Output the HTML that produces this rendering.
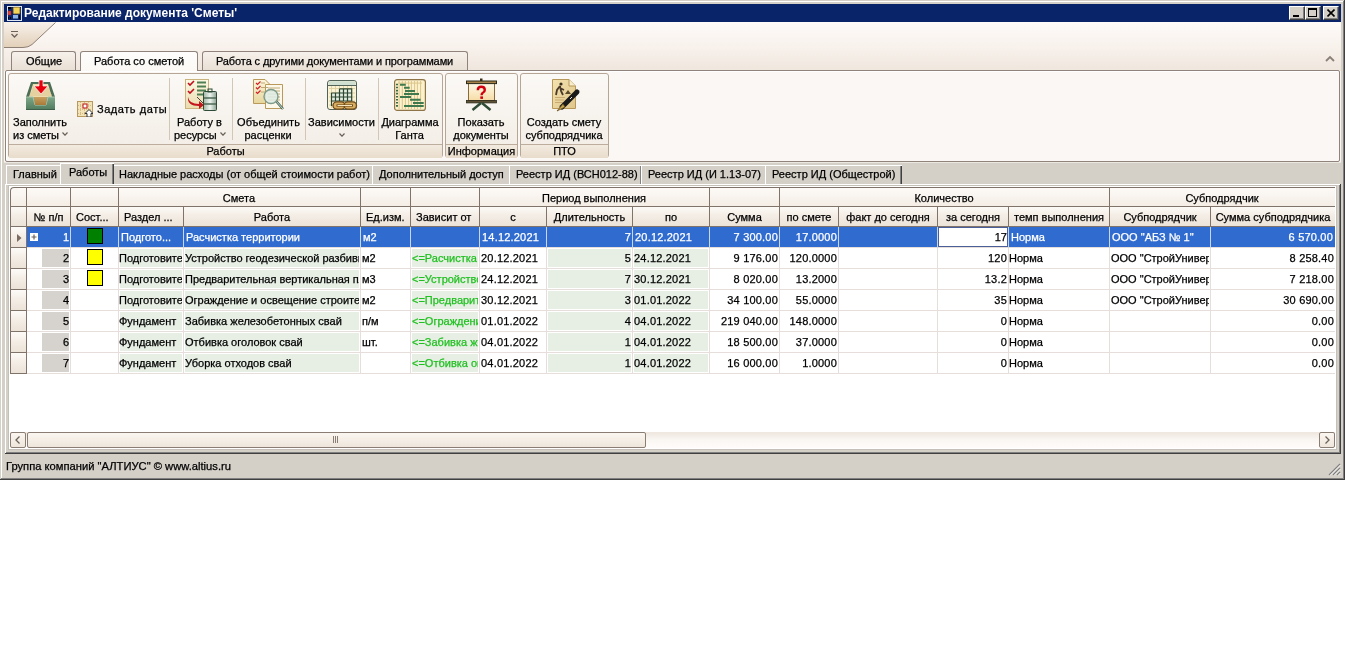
<!DOCTYPE html><html><head><meta charset="utf-8"><style>
html,body{margin:0;padding:0;}
body{width:1345px;height:648px;overflow:hidden;background:#fff;position:relative;font-family:"Liberation Sans", sans-serif;font-size:11px;color:#000;}
.t{position:absolute;white-space:nowrap;line-height:13px;}
#root{position:absolute;left:0;top:0;width:1345px;height:648px;will-change:transform;}
.t,.c{-webkit-text-stroke:0.25px currentColor;}
.c{position:absolute;overflow:hidden;white-space:nowrap;line-height:13px;}

</style></head><body><div id="root">
<div style="position:absolute;left:0px;top:0px;width:1345px;height:480px;background:#d4d0c8;"></div>
<div style="position:absolute;left:0px;top:0px;width:1344px;height:1px;background:#d4d0c8;"></div>
<div style="position:absolute;left:1px;top:1px;width:1342px;height:1px;background:#fff;"></div>
<div style="position:absolute;left:1px;top:1px;width:1px;height:478px;background:#fff;"></div>
<div style="position:absolute;left:1344px;top:0px;width:1px;height:480px;background:#404040;"></div>
<div style="position:absolute;left:0px;top:479px;width:1345px;height:1px;background:#404040;"></div>
<div style="position:absolute;left:1343px;top:1px;width:1px;height:478px;background:#808080;"></div>
<div style="position:absolute;left:1px;top:478px;width:1343px;height:1px;background:#808080;"></div>
<div style="position:absolute;left:4px;top:4px;width:1337px;height:18px;background:#0a246a;"></div>
<svg style="position:absolute;left:7px;top:6px" width="15" height="15" viewBox="0 0 15 15">
<rect x="0" y="0" width="15" height="15" fill="#dde6f2"/>
<rect x="1" y="1" width="13" height="13" fill="#0a246a"/>
<rect x="1" y="1" width="3" height="2" fill="#000"/>
<rect x="1" y="5" width="3" height="4" fill="#e0483e" stroke="#902020" stroke-width="0.5"/>
<rect x="6.3" y="1.3" width="6.5" height="6.5" rx="1" fill="#f5d45a" stroke="#b08a20" stroke-width="0.7"/>
<rect x="6" y="9" width="5" height="3.5" fill="#8fb4ea"/>
<rect x="1" y="11" width="1" height="2" fill="#000"/>
<rect x="3" y="11" width="1" height="2" fill="#000"/>
<rect x="12" y="9" width="1" height="4" fill="#000"/>
</svg>
<div class="t" style="left:24px;top:6px;color:#fff;font-weight:bold;font-size:12px;line-height:14px;-webkit-text-stroke:0;">Редактирование документа &#x27;Сметы&#x27;</div>
<div style="position:absolute;left:1289px;top:6px;width:16px;height:14px;background:#d4d0c8;box-sizing:border-box;border-top:1px solid #fff;border-left:1px solid #fff;border-right:1px solid #404040;border-bottom:1px solid #404040;"><div style="position:absolute;left:0;top:0;right:0;bottom:0;border-right:1px solid #808080;border-bottom:1px solid #808080;"></div><div style="position:absolute;left:3px;top:8px;width:6px;height:2px;background:#000"></div></div>
<div style="position:absolute;left:1305px;top:6px;width:16px;height:14px;background:#d4d0c8;box-sizing:border-box;border-top:1px solid #fff;border-left:1px solid #fff;border-right:1px solid #404040;border-bottom:1px solid #404040;"><div style="position:absolute;left:0;top:0;right:0;bottom:0;border-right:1px solid #808080;border-bottom:1px solid #808080;"></div><div style="position:absolute;left:2px;top:1px;width:9px;height:9px;box-sizing:border-box;border:1px solid #000;border-top-width:2px"></div></div>
<div style="position:absolute;left:1323px;top:6px;width:16px;height:14px;background:#d4d0c8;box-sizing:border-box;border-top:1px solid #fff;border-left:1px solid #fff;border-right:1px solid #404040;border-bottom:1px solid #404040;"><div style="position:absolute;left:0;top:0;right:0;bottom:0;border-right:1px solid #808080;border-bottom:1px solid #808080;"></div><svg style="position:absolute;left:3px;top:2px" width="8" height="8" viewBox="0 0 8 8"><path d="M0.5 0.5L7.5 7.5M7.5 0.5L0.5 7.5" stroke="#000" stroke-width="1.6"/></svg></div>
<div style="position:absolute;left:4px;top:22px;width:1337px;height:140px;background:#f9f6f2;"></div>
<div style="position:absolute;left:4px;top:22px;width:1337px;height:49px;background:linear-gradient(#fdfaf8 0%,#f9f3ee 45%,#efe6dd 100%);"></div>
<svg style="position:absolute;left:4px;top:22px" width="60" height="28" viewBox="0 0 60 28">
<defs><linearGradient id="qa" x1="0" y1="0" x2="0" y2="1"><stop offset="0" stop-color="#f8f2ec"/><stop offset="1" stop-color="#e2cfb8"/></linearGradient></defs>
<path d="M0 0 H52 L28 22.5 Q24.5 25.5 19 25.5 H0 Z" fill="url(#qa)"/>
<path d="M51.5 0.5 L28 22.5 Q24.5 25.5 19 25.5 H0" fill="none" stroke="#8f8076" stroke-width="1"/>
<path d="M7 9.5 H14" stroke="#6b625a" stroke-width="1"/>
<path d="M7.5 12 L10.5 15 L13.5 12" stroke="#6b625a" stroke-width="1.3" fill="none"/>
</svg>
<div style="position:absolute;left:11px;top:51px;width:65px;height:19px;box-sizing:border-box;border:1px solid #8f837b;border-bottom:none;border-radius:3px 3px 0 0;background:linear-gradient(#f6f1eb,#e9e0d5);"></div>
<div class="t" style="left:26px;top:55px;">Общие</div>
<div style="position:absolute;left:202px;top:51px;width:266px;height:19px;box-sizing:border-box;border:1px solid #8f837b;border-bottom:none;border-radius:3px 3px 0 0;background:linear-gradient(#f6f1eb,#e9e0d5);"></div>
<div class="t" style="left:216px;top:55px;letter-spacing:-0.11px;">Работа с другими документами и программами</div>
<div style="position:absolute;left:5px;top:70px;width:1335px;height:92px;box-sizing:border-box;border:1px solid #8f837b;border-radius:2px;background:#fbf7f4;box-shadow:inset 1px 1px 0 #fff;"></div>
<div style="position:absolute;left:80px;top:51px;width:118px;height:20px;box-sizing:border-box;border:1px solid #8f837b;border-bottom:none;border-radius:3px 3px 0 0;background:linear-gradient(#fefdfc,#fbf8f4);"></div>
<div class="t" style="left:94px;top:55px;">Работа со сметой</div>
<svg style="position:absolute;left:1325px;top:55px" width="10" height="7" viewBox="0 0 10 7"><path d="M1 6 L5 2 L9 6" stroke="#8a8078" stroke-width="1.8" fill="none"/></svg>
<div style="position:absolute;left:8px;top:73px;width:435px;height:85px;box-sizing:border-box;border:1px solid #b5a696;border-radius:3px;background:linear-gradient(#fbf9f6,#f2ece4);"></div>
<div style="position:absolute;left:9px;top:144px;width:433px;height:13px;border-top:1px solid #bcad9d;background:linear-gradient(#f3ebe0,#e8dccb);"></div>
<div class="t" style="left:8px;top:145px;width:435px;text-align:center;">Работы</div>
<div style="position:absolute;left:445px;top:73px;width:73px;height:85px;box-sizing:border-box;border:1px solid #b5a696;border-radius:3px;background:linear-gradient(#fbf9f6,#f2ece4);"></div>
<div style="position:absolute;left:446px;top:144px;width:71px;height:13px;border-top:1px solid #bcad9d;background:linear-gradient(#f3ebe0,#e8dccb);"></div>
<div class="t" style="left:445px;top:145px;width:73px;text-align:center;">Информация</div>
<div style="position:absolute;left:520px;top:73px;width:89px;height:85px;box-sizing:border-box;border:1px solid #b5a696;border-radius:3px;background:linear-gradient(#fbf9f6,#f2ece4);"></div>
<div style="position:absolute;left:521px;top:144px;width:87px;height:13px;border-top:1px solid #bcad9d;background:linear-gradient(#f3ebe0,#e8dccb);"></div>
<div class="t" style="left:520px;top:145px;width:89px;text-align:center;">ПТО</div>
<div style="position:absolute;left:169px;top:78px;width:1px;height:62px;background:#d2c6b8;"></div>
<div style="position:absolute;left:232px;top:78px;width:1px;height:62px;background:#d2c6b8;"></div>
<div style="position:absolute;left:305px;top:78px;width:1px;height:62px;background:#d2c6b8;"></div>
<div style="position:absolute;left:378px;top:78px;width:1px;height:62px;background:#d2c6b8;"></div>
<svg style="position:absolute;left:25px;top:79px" width="32" height="32" viewBox="0 0 32 32">
<defs><linearGradient id="tg" x1="0" y1="0" x2="0" y2="1"><stop offset="0" stop-color="#7fa888"/><stop offset="1" stop-color="#4f7a5c"/></linearGradient>
<linearGradient id="tb" x1="0" y1="0" x2="0" y2="1"><stop offset="0" stop-color="#c7a060"/><stop offset="1" stop-color="#a87a38"/></linearGradient></defs>
<path d="M6 3 H25 L30 18 H1 Z" fill="#4c6e56"/>
<path d="M8 5 H23 L27 18 H4 Z" fill="#efdcae"/>
<path d="M8 8 H23 M7 10 H24 M7 12 H25 M6 14 H26 M5 16 H27" stroke="#d8c08c" stroke-width="0.8"/>
<path d="M1 18 H30 V31 H1 Z" fill="url(#tg)"/>
<path d="M1 18 H8 L10 26 H21 L23 18 H30" fill="none" stroke="#a9c6ae" stroke-width="1"/>
<path d="M9 18 H22 L21 26 H10 Z" fill="url(#tb)"/>
<path d="M1 30.5 H30" stroke="#3d5e48" stroke-width="1"/>
<path d="M14 1 H18 V7 H23 L16 15 L9 7 H14 Z" fill="#e8000c" stroke="#fff" stroke-width="0.7"/>
</svg>
<svg style="position:absolute;left:77px;top:101px" width="16" height="16" viewBox="0 0 16 16">
<rect x="0.5" y="0.5" width="15" height="15" fill="#f2e4b8" stroke="#b89a60"/>
<path d="M1 4.5 H15 M1 8.5 H15 M1 12.5 H15 M3.5 1 V15 M7.5 1 V15 M11.5 1 V15" stroke="#cfae70" stroke-width="0.8" stroke-dasharray="1 1"/>
<rect x="6" y="3" width="4" height="4" fill="#fff" stroke="#c02020" stroke-width="1.1"/>
<path d="M12 8.5 L16 12.5 H14 V16 H10 V12.5 H8 Z" fill="#fff" stroke="#303030" stroke-width="1"/>
</svg>
<svg style="position:absolute;left:185px;top:78px" width="32" height="33" viewBox="0 0 32 33">
<defs><linearGradient id="pp" x1="0" y1="0" x2="0" y2="1"><stop offset="0" stop-color="#fdf8e4"/><stop offset="1" stop-color="#eadcae"/></linearGradient>
<linearGradient id="bt" x1="0" y1="0" x2="1" y2="0"><stop offset="0" stop-color="#9fb5a5"/><stop offset="0.5" stop-color="#eef4ef"/><stop offset="1" stop-color="#8aa292"/></linearGradient></defs>
<rect x="0.5" y="1.5" width="23" height="29" fill="url(#pp)" stroke="#c9b27c"/>
<path d="M3 5 L5 7 L9 3 M3 13 L5 15 L9 11" stroke="#c0101c" stroke-width="1.6" fill="none"/>
<path d="M12 4.5 H21 M12 8.5 H21 M12 12.5 H21 M12 16.5 H21" stroke="#4f7f52" stroke-width="2"/>
<path d="M3 19 Q4 26 14 26 V23 L19 27 L14 31 V28 Q2 28 3 19 Z" fill="#c4141c"/>
<path d="M12 19 L19 26" stroke="#202020" stroke-width="0.8"/>
<rect x="18.5" y="13.5" width="13" height="19" rx="1" fill="url(#bt)" stroke="#2f4a36"/>
<rect x="23" y="11" width="4" height="3" fill="none" stroke="#2f4a36"/>
<path d="M19 20 H31 M19 26 H31" stroke="#4c6a54" stroke-width="1.5"/>
</svg>
<svg style="position:absolute;left:253px;top:78px" width="32" height="33" viewBox="0 0 32 33">
<defs><linearGradient id="d1" x1="0" y1="0" x2="0" y2="1"><stop offset="0" stop-color="#fdf6dc"/><stop offset="1" stop-color="#e6d59c"/></linearGradient></defs>
<path d="M0.5 1.5 H12 L16.5 6 V25.5 H0.5 Z" fill="url(#d1)" stroke="#b99a5a"/>
<path d="M12.5 6.5 H29.5 V30.5 H12.5 Z" fill="#fdf9ea" stroke="#b99a5a"/>
<path d="M3 5 L4.5 6.5 L7.5 3.5 M3 9.5 L4.5 11 L7.5 8 M3 14 L4.5 15.5 L7.5 12.5" stroke="#d0202a" stroke-width="1.2" fill="none"/>
<path d="M8 5 H12 M8 9.5 H15 M8 14 H15 M15 10 H27 M15 13 H27 M15 16 H27 M15 19 H27 M15 22 H27" stroke="#b8a070" stroke-width="0.9"/>
<path d="M23 23 L30 31" stroke="#4a6a5a" stroke-width="2.6"/>
<path d="M23 23 L30 31" stroke="#c8d8d0" stroke-width="1"/>
<circle cx="18" cy="18.5" r="7" fill="#dfece4" fill-opacity="0.85" stroke="#7e9a8a" stroke-width="1.4"/>
</svg>
<svg style="position:absolute;left:327px;top:80px" width="31" height="31" viewBox="0 0 31 31">
<rect x="0.5" y="0.5" width="29" height="29" rx="2.5" fill="#fbf3d6" stroke="#52645a"/>
<rect x="1.5" y="1.2" width="27" height="4.3" rx="1.5" fill="#cfe0d2"/>
<path d="M1 5.5 H29" stroke="#52645a"/>
<path d="M2 8.5 H28 M2 13 H28 M2 17 H28 M2 21 H28 M2 25 H28 M4.5 6 V28 M8.5 6 V28 M12.5 6 V28 M16.5 6 V28 M20.5 6 V28 M24.5 6 V28" stroke="#ddd0a0" stroke-width="0.9"/>
<path d="M12.5 9 H24.5 V13 H12.5 Z M4.5 13 H24.5 V21 H4.5 Z" fill="#e4ece0"/>
<path d="M12.5 8.8 H24.7 V21.2 M4.3 13 H24.7 M4.3 17 H24.7 M4.3 21 H24.7 M4.5 13 V26 M8.5 13 V21 M12.5 8.8 V21 M16.5 8.8 V21 M20.5 8.8 V21" stroke="#2b4630" stroke-width="1.2" fill="none"/>
<rect x="6" y="21.8" width="12" height="7.4" rx="3.7" fill="#d8ae62" stroke="#6e4a18" stroke-width="1.3"/>
<rect x="17" y="21.8" width="12.5" height="7.4" rx="3.7" fill="#d8ae62" stroke="#6e4a18" stroke-width="1.3"/>
<path d="M9.5 25.5 H26" stroke="#6e4a18" stroke-width="2.2"/>
<path d="M10.5 25.5 H25" stroke="#f6e6c0" stroke-width="1"/>
</svg>
<svg style="position:absolute;left:394px;top:79px" width="32" height="32" viewBox="0 0 32 32">
<rect x="0.6" y="0.6" width="30.8" height="30.8" rx="2.5" fill="#fbf1cc" stroke="#8f7448" stroke-width="1.2"/>
<path d="M5.1 2 V30 M8.3 2 V30 M11.4 2 V30 M14.6 2 V30 M17.4 2 V30 M20.6 2 V30 M23.4 2 V30 M26.6 2 V30" stroke="#dcc58a" stroke-width="1"/>
<path d="M4 4.1 H28" stroke="#dcc58a" stroke-width="1"/>
<path d="M3 4.7 V28" stroke="#3d6a48" stroke-width="2" stroke-dasharray="1.6 1.45"/>
<path d="M6 5.8 H11.7 M10 8.8 H15.7 M11 11.9 H21 M10 15 H25 M6 17.9 H17 M16 20.8 H26.6 M19 23.9 H29.7 M10 27 H29.7" stroke="#3f7a4e" stroke-width="2"/>
</svg>
<svg style="position:absolute;left:466px;top:78px" width="31" height="33" viewBox="0 0 31 33">
<defs><linearGradient id="sc" x1="0" y1="0" x2="0" y2="1"><stop offset="0" stop-color="#fffbec"/><stop offset="1" stop-color="#f6dca6"/></linearGradient></defs>
<rect x="14" y="0.5" width="2.5" height="3" fill="#3a2e1a"/>
<rect x="2.5" y="4.5" width="26" height="18" fill="url(#sc)" stroke="#8a6a38" stroke-width="1"/>
<rect x="0.5" y="3" width="30" height="2.6" fill="#a8844a" stroke="#2a2a1a" stroke-width="1"/>
<rect x="0.5" y="22.5" width="30" height="2.4" fill="#5e5034" stroke="#2a2a1a" stroke-width="0.8"/>
<path d="M15 25 L6.5 32 M16 25 L24.5 32" stroke="#2e4a34" stroke-width="2.4"/>
<path d="M11.8 12.2 Q11.8 8.8 15.2 8.8 Q18.8 8.8 18.8 12 Q18.8 14 16.6 15 Q15.6 15.6 15.6 17.2" stroke="#d00010" stroke-width="2.4" fill="none"/>
<rect x="14.3" y="18.4" width="2.7" height="2.5" fill="#d00010"/>
</svg>
<svg style="position:absolute;left:551px;top:78px" width="30" height="34" viewBox="0 0 30 34">
<defs><linearGradient id="dp" x1="0" y1="0" x2="1" y2="1"><stop offset="0" stop-color="#f3e2b0"/><stop offset="1" stop-color="#e0c68a"/></linearGradient></defs>
<path d="M1.5 1.5 H18 L24.5 8 V30.5 H1.5 Z" fill="url(#dp)" stroke="#b8985a"/>
<path d="M18 1.5 V8 H24.5" fill="#f8eccc" stroke="#b8985a"/>
<circle cx="10" cy="6" r="1.6" fill="#3a3020"/>
<path d="M9 8 L6 12 L5 17 M9 8 L10 13 L12 17 M9 10 L13 12" stroke="#4a3a2a" stroke-width="1.8" fill="none"/>
<path d="M14 16 L17 12 L20 16 Z" fill="#5a4a2a"/>
<path d="M4 19.5 H14 M4 22 H13 M4 24.5 H12" stroke="#c8aa70" stroke-width="1"/>
<path d="M26 14 L11 29" stroke="#1a1a1a" stroke-width="5" stroke-linecap="round"/>
<path d="M21 19 L19 21" stroke="#e8e8e8" stroke-width="1"/>
<path d="M12 26 L6 33 L14 29 Z" fill="#c8a850" stroke="#6a5020" stroke-width="0.8"/>
</svg>
<div class="t" style="left:13px;top:116px;">Заполнить</div>
<div class="t" style="left:13px;top:129px;">из сметы</div>
<svg style="position:absolute;left:62px;top:132px" width="6" height="4" viewBox="0 0 6 4"><path d="M0.5 0.5 L3 3.2 L5.5 0.5" stroke="#6a625a" stroke-width="1.2" fill="none"/></svg>
<div class="t" style="left:97px;top:103px;letter-spacing:0.55px;">Задать даты</div>
<div class="t" style="left:177px;top:116px;">Работу в</div>
<div class="t" style="left:174px;top:129px;">ресурсы</div>
<svg style="position:absolute;left:220px;top:132px" width="6" height="4" viewBox="0 0 6 4"><path d="M0.5 0.5 L3 3.2 L5.5 0.5" stroke="#6a625a" stroke-width="1.2" fill="none"/></svg>
<div class="t" style="left:168.5px;top:116px;width:200px;text-align:center;">Объединить</div>
<div class="t" style="left:168px;top:129px;width:200px;text-align:center;">расценки</div>
<div class="t" style="left:241.5px;top:116px;width:200px;text-align:center;">Зависимости</div>
<svg style="position:absolute;left:339px;top:133px" width="6" height="4" viewBox="0 0 6 4"><path d="M0.5 0.5 L3 3.2 L5.5 0.5" stroke="#6a625a" stroke-width="1.2" fill="none"/></svg>
<div class="t" style="left:310px;top:116px;width:200px;text-align:center;">Диаграмма</div>
<div class="t" style="left:309.5px;top:129px;width:200px;text-align:center;">Ганта</div>
<div class="t" style="left:381px;top:116px;width:200px;text-align:center;">Показать</div>
<div class="t" style="left:381px;top:129px;width:200px;text-align:center;">документы</div>
<div class="t" style="left:464px;top:116px;width:200px;text-align:center;">Создать смету</div>
<div class="t" style="left:464px;top:129px;width:200px;text-align:center;">субподрядчика</div>
<div style="position:absolute;left:4px;top:162px;width:1337px;height:292px;background:#d4d0c8;"></div>
<div style="position:absolute;left:4px;top:162px;width:1337px;height:1px;background:#ebe8e2;"></div>
<div style="position:absolute;left:5px;top:184px;width:1336px;height:1px;background:#fff;"></div>
<div style="position:absolute;left:5px;top:184px;width:1px;height:270px;background:#fff;"></div>
<div style="position:absolute;left:5px;top:453px;width:1336px;height:1px;background:#404040;"></div>
<div style="position:absolute;left:1340px;top:184px;width:1px;height:270px;background:#404040;"></div>
<div style="position:absolute;left:6px;top:452px;width:1334px;height:1px;background:#808080;"></div>
<div style="position:absolute;left:1339px;top:185px;width:1px;height:268px;background:#808080;"></div>
<div style="position:absolute;left:6px;top:165px;width:55px;height:19px;background:#d4d0c8;border-top:1px solid #fff;border-left:1px solid #fff;box-sizing:border-box;"></div>
<div class="t" style="left:13px;top:168px;">Главный</div>
<div style="position:absolute;left:113px;top:165px;width:261px;height:19px;background:#d4d0c8;border-top:1px solid #fff;border-left:1px solid #fff;box-sizing:border-box;"></div>
<div style="position:absolute;left:373px;top:166px;width:1px;height:18px;background:#404040;"></div>
<div style="position:absolute;left:372px;top:166px;width:1px;height:18px;background:#808080;"></div>
<div class="t" style="left:119px;top:168px;">Накладные расходы (от общей стоимости работ)</div>
<div style="position:absolute;left:372px;top:165px;width:139px;height:19px;background:#d4d0c8;border-top:1px solid #fff;border-left:1px solid #fff;box-sizing:border-box;"></div>
<div style="position:absolute;left:510px;top:166px;width:1px;height:18px;background:#404040;"></div>
<div style="position:absolute;left:509px;top:166px;width:1px;height:18px;background:#808080;"></div>
<div class="t" style="left:379px;top:168px;">Дополнительный доступ</div>
<div style="position:absolute;left:509px;top:165px;width:133px;height:19px;background:#d4d0c8;border-top:1px solid #fff;border-left:1px solid #fff;box-sizing:border-box;"></div>
<div style="position:absolute;left:641px;top:166px;width:1px;height:18px;background:#404040;"></div>
<div style="position:absolute;left:640px;top:166px;width:1px;height:18px;background:#808080;"></div>
<div class="t" style="left:516px;top:168px;">Реестр ИД (ВСН012-88)</div>
<div style="position:absolute;left:641px;top:165px;width:126px;height:19px;background:#d4d0c8;border-top:1px solid #fff;border-left:1px solid #fff;box-sizing:border-box;"></div>
<div style="position:absolute;left:766px;top:166px;width:1px;height:18px;background:#404040;"></div>
<div style="position:absolute;left:765px;top:166px;width:1px;height:18px;background:#808080;"></div>
<div class="t" style="left:648px;top:168px;">Реестр ИД (И 1.13-07)</div>
<div style="position:absolute;left:765px;top:165px;width:137px;height:19px;background:#d4d0c8;border-top:1px solid #fff;border-left:1px solid #fff;box-sizing:border-box;"></div>
<div style="position:absolute;left:901px;top:166px;width:1px;height:18px;background:#404040;"></div>
<div style="position:absolute;left:900px;top:166px;width:1px;height:18px;background:#808080;"></div>
<div class="t" style="left:772px;top:168px;">Реестр ИД (Общестрой)</div>
<div style="position:absolute;left:60px;top:163px;width:54px;height:21px;background:#d4d0c8;border-top:1px solid #fff;border-left:1px solid #fff;box-sizing:border-box;"></div>
<div style="position:absolute;left:113px;top:164px;width:1px;height:20px;background:#404040;"></div>
<div style="position:absolute;left:112px;top:164px;width:1px;height:20px;background:#808080;"></div>
<div class="t" style="left:69px;top:166px;">Работы</div>
<div style="position:absolute;left:8px;top:185px;width:1329px;height:265px;background:#fff;box-sizing:border-box;border:1px solid #c4c0b8;"></div>
<div style="position:absolute;left:9px;top:186px;width:1327px;height:263px;box-sizing:border-box;border:1px solid #fff;"></div>
<div style="position:absolute;left:10px;top:187px;width:1325px;height:40px;background:linear-gradient(#fdfbf8,#f5efe8 40%,#ece3d8);"></div>
<div style="position:absolute;left:10px;top:206px;width:1325px;height:20px;background:linear-gradient(#fdfbf8,#f5efe8 40%,#ece3d8);"></div>
<div style="position:absolute;left:10px;top:187px;width:1325px;height:1px;background:#7f736a;border-radius:3px 0 0 0;"></div>
<div style="position:absolute;left:10px;top:187px;width:1px;height:40px;background:#7f736a;"></div>
<div style="position:absolute;left:10px;top:206px;width:1325px;height:1px;background:#7f736a;"></div>
<div style="position:absolute;left:10px;top:226px;width:1325px;height:1px;background:#7f736a;"></div>
<div style="position:absolute;left:10px;top:187px;width:5px;height:5px;background:#fff;"></div>
<div style="position:absolute;left:10px;top:187px;width:8px;height:8px;box-sizing:border-box;border-left:1px solid #7f736a;border-top:1px solid #7f736a;border-radius:4px 0 0 0;background:#faf7f3;"></div>
<div style="position:absolute;left:26px;top:187px;width:1px;height:20px;background:#7f736a;"></div>
<div style="position:absolute;left:70px;top:187px;width:1px;height:20px;background:#7f736a;"></div>
<div style="position:absolute;left:118px;top:187px;width:1px;height:20px;background:#7f736a;"></div>
<div style="position:absolute;left:360px;top:187px;width:1px;height:20px;background:#7f736a;"></div>
<div style="position:absolute;left:410px;top:187px;width:1px;height:20px;background:#7f736a;"></div>
<div style="position:absolute;left:479px;top:187px;width:1px;height:20px;background:#7f736a;"></div>
<div style="position:absolute;left:709px;top:187px;width:1px;height:20px;background:#7f736a;"></div>
<div style="position:absolute;left:779px;top:187px;width:1px;height:20px;background:#7f736a;"></div>
<div style="position:absolute;left:1109px;top:187px;width:1px;height:20px;background:#7f736a;"></div>
<div style="position:absolute;left:26px;top:206px;width:1px;height:21px;background:#7f736a;"></div>
<div style="position:absolute;left:70px;top:206px;width:1px;height:21px;background:#7f736a;"></div>
<div style="position:absolute;left:118px;top:206px;width:1px;height:21px;background:#7f736a;"></div>
<div style="position:absolute;left:183px;top:206px;width:1px;height:21px;background:#7f736a;"></div>
<div style="position:absolute;left:360px;top:206px;width:1px;height:21px;background:#7f736a;"></div>
<div style="position:absolute;left:410px;top:206px;width:1px;height:21px;background:#7f736a;"></div>
<div style="position:absolute;left:479px;top:206px;width:1px;height:21px;background:#7f736a;"></div>
<div style="position:absolute;left:546px;top:206px;width:1px;height:21px;background:#7f736a;"></div>
<div style="position:absolute;left:632px;top:206px;width:1px;height:21px;background:#7f736a;"></div>
<div style="position:absolute;left:709px;top:206px;width:1px;height:21px;background:#7f736a;"></div>
<div style="position:absolute;left:779px;top:206px;width:1px;height:21px;background:#7f736a;"></div>
<div style="position:absolute;left:838px;top:206px;width:1px;height:21px;background:#7f736a;"></div>
<div style="position:absolute;left:937px;top:206px;width:1px;height:21px;background:#7f736a;"></div>
<div style="position:absolute;left:1008px;top:206px;width:1px;height:21px;background:#7f736a;"></div>
<div style="position:absolute;left:1109px;top:206px;width:1px;height:21px;background:#7f736a;"></div>
<div style="position:absolute;left:1210px;top:206px;width:1px;height:21px;background:#7f736a;"></div>
<div class="t" style="left:118px;top:192px;width:242px;text-align:center;">Смета</div>
<div class="t" style="left:479px;top:192px;width:230px;text-align:center;">Период выполнения</div>
<div class="t" style="left:779px;top:192px;width:330px;text-align:center;">Количество</div>
<div class="t" style="left:1109px;top:192px;width:226px;text-align:center;">Субподрядчик</div>
<div class="t" style="left:27px;top:211px;width:43px;text-align:center;">№ п/п</div>
<div class="t" style="left:76px;top:211px;">Сост...</div>
<div class="t" style="left:124px;top:211px;">Раздел ...</div>
<div class="t" style="left:184px;top:211px;width:176px;text-align:center;">Работа</div>
<div class="t" style="left:366px;top:211px;">Ед.изм.</div>
<div class="t" style="left:416px;top:211px;">Зависит от</div>
<div class="t" style="left:480px;top:211px;width:66px;text-align:center;">с</div>
<div class="t" style="left:547px;top:211px;width:85px;text-align:center;">Длительность</div>
<div class="t" style="left:633px;top:211px;width:76px;text-align:center;">по</div>
<div class="t" style="left:710px;top:211px;width:69px;text-align:center;">Сумма</div>
<div class="t" style="left:780px;top:211px;width:58px;text-align:center;">по смете</div>
<div class="t" style="left:839px;top:211px;width:98px;text-align:center;">факт до сегодня</div>
<div class="t" style="left:938px;top:211px;width:70px;text-align:center;">за сегодня</div>
<div class="t" style="left:1009px;top:211px;width:100px;text-align:center;">темп выполнения</div>
<div class="t" style="left:1110px;top:211px;width:100px;text-align:center;">Субподрядчик</div>
<div class="t" style="left:1211px;top:211px;width:124px;text-align:center;">Сумма субподрядчика</div>
<div style="position:absolute;left:10px;top:227px;width:16px;height:20px;background:linear-gradient(#fdfbf8,#f5efe8 40%,#ece3d8);"></div>
<div style="position:absolute;left:10px;top:227px;width:1px;height:21px;background:#7f736a;"></div>
<div style="position:absolute;left:10px;top:247px;width:17px;height:1px;background:#7f736a;"></div>
<div style="position:absolute;left:26px;top:227px;width:1px;height:21px;background:#7f736a;"></div>
<div style="position:absolute;left:10px;top:248px;width:16px;height:20px;background:linear-gradient(#fdfbf8,#f5efe8 40%,#ece3d8);"></div>
<div style="position:absolute;left:10px;top:248px;width:1px;height:21px;background:#7f736a;"></div>
<div style="position:absolute;left:10px;top:268px;width:17px;height:1px;background:#7f736a;"></div>
<div style="position:absolute;left:26px;top:248px;width:1px;height:21px;background:#7f736a;"></div>
<div style="position:absolute;left:10px;top:269px;width:16px;height:20px;background:linear-gradient(#fdfbf8,#f5efe8 40%,#ece3d8);"></div>
<div style="position:absolute;left:10px;top:269px;width:1px;height:21px;background:#7f736a;"></div>
<div style="position:absolute;left:10px;top:289px;width:17px;height:1px;background:#7f736a;"></div>
<div style="position:absolute;left:26px;top:269px;width:1px;height:21px;background:#7f736a;"></div>
<div style="position:absolute;left:10px;top:290px;width:16px;height:20px;background:linear-gradient(#fdfbf8,#f5efe8 40%,#ece3d8);"></div>
<div style="position:absolute;left:10px;top:290px;width:1px;height:21px;background:#7f736a;"></div>
<div style="position:absolute;left:10px;top:310px;width:17px;height:1px;background:#7f736a;"></div>
<div style="position:absolute;left:26px;top:290px;width:1px;height:21px;background:#7f736a;"></div>
<div style="position:absolute;left:10px;top:311px;width:16px;height:20px;background:linear-gradient(#fdfbf8,#f5efe8 40%,#ece3d8);"></div>
<div style="position:absolute;left:10px;top:311px;width:1px;height:21px;background:#7f736a;"></div>
<div style="position:absolute;left:10px;top:331px;width:17px;height:1px;background:#7f736a;"></div>
<div style="position:absolute;left:26px;top:311px;width:1px;height:21px;background:#7f736a;"></div>
<div style="position:absolute;left:10px;top:332px;width:16px;height:20px;background:linear-gradient(#fdfbf8,#f5efe8 40%,#ece3d8);"></div>
<div style="position:absolute;left:10px;top:332px;width:1px;height:21px;background:#7f736a;"></div>
<div style="position:absolute;left:10px;top:352px;width:17px;height:1px;background:#7f736a;"></div>
<div style="position:absolute;left:26px;top:332px;width:1px;height:21px;background:#7f736a;"></div>
<div style="position:absolute;left:10px;top:353px;width:16px;height:20px;background:linear-gradient(#fdfbf8,#f5efe8 40%,#ece3d8);"></div>
<div style="position:absolute;left:10px;top:353px;width:1px;height:21px;background:#7f736a;"></div>
<div style="position:absolute;left:10px;top:373px;width:17px;height:1px;background:#7f736a;"></div>
<div style="position:absolute;left:26px;top:353px;width:1px;height:21px;background:#7f736a;"></div>
<svg style="position:absolute;left:17px;top:234px" width="5" height="8" viewBox="0 0 5 8"><path d="M0 0 L4.5 4 L0 8 Z" fill="#7a6a60"/></svg>
<div style="position:absolute;left:27px;top:227px;width:1308px;height:20px;background:#306bcf;"></div>
<div style="position:absolute;left:27px;top:247px;width:1308px;height:1px;background:#e6dedb;"></div>
<div style="position:absolute;left:30px;top:233px;width:8px;height:8px;background:#fff;"></div>
<svg style="position:absolute;left:30px;top:233px" width="8" height="8" viewBox="0 0 8 8"><path d="M4 1.5 V6.5 M1.5 4 H6.5" stroke="#6a625a" stroke-width="1.2"/></svg>
<div class="t" style="left:27px;top:231px;width:42px;text-align:right;color:#fff;">1</div>
<div style="position:absolute;left:70px;top:227px;width:1px;height:21px;background:#c8d6f0;"></div>
<div style="position:absolute;left:87px;top:228px;width:16px;height:16px;box-sizing:border-box;border:1px solid #000;background:#008000;"></div>
<div style="position:absolute;left:118px;top:227px;width:1px;height:21px;background:#c8d6f0;"></div>
<div class="c" style="left:121px;top:231px;width:62px;color:#fff;">Подгото...</div>
<div style="position:absolute;left:183px;top:227px;width:1px;height:21px;background:#c8d6f0;"></div>
<div class="c" style="left:186px;top:231px;width:174px;color:#fff;">Расчистка территории</div>
<div style="position:absolute;left:360px;top:227px;width:1px;height:21px;background:#c8d6f0;"></div>
<div class="c" style="left:363px;top:231px;width:47px;color:#fff;">м2</div>
<div style="position:absolute;left:410px;top:227px;width:1px;height:21px;background:#c8d6f0;"></div>
<div style="position:absolute;left:479px;top:227px;width:1px;height:21px;background:#c8d6f0;"></div>
<div class="c" style="left:482px;top:231px;width:64px;color:#fff;letter-spacing:0.2px;">14.12.2021</div>
<div style="position:absolute;left:546px;top:227px;width:1px;height:21px;background:#c8d6f0;"></div>
<div class="c" style="left:547px;top:231px;width:84px;text-align:right;color:#fff;letter-spacing:0.2px;">7</div>
<div style="position:absolute;left:632px;top:227px;width:1px;height:21px;background:#c8d6f0;"></div>
<div class="c" style="left:635px;top:231px;width:74px;color:#fff;letter-spacing:0.2px;">20.12.2021</div>
<div style="position:absolute;left:709px;top:227px;width:1px;height:21px;background:#c8d6f0;"></div>
<div class="c" style="left:710px;top:231px;width:68px;text-align:right;color:#fff;letter-spacing:0.2px;">7 300.00</div>
<div style="position:absolute;left:779px;top:227px;width:1px;height:21px;background:#c8d6f0;"></div>
<div class="c" style="left:780px;top:231px;width:57px;text-align:right;color:#fff;letter-spacing:0.2px;">17.0000</div>
<div style="position:absolute;left:838px;top:227px;width:1px;height:21px;background:#c8d6f0;"></div>
<div style="position:absolute;left:937px;top:227px;width:1px;height:21px;background:#c8d6f0;"></div>
<div style="position:absolute;left:938px;top:227px;width:70px;height:20px;box-sizing:border-box;border:1px solid #4a5f9a;background:#fff;"></div>
<div class="t" style="left:938px;top:231px;width:69px;text-align:right;">17</div>
<div style="position:absolute;left:1008px;top:227px;width:1px;height:21px;background:#c8d6f0;"></div>
<div class="c" style="left:1011px;top:231px;width:98px;color:#fff;">Норма</div>
<div style="position:absolute;left:1109px;top:227px;width:1px;height:21px;background:#c8d6f0;"></div>
<div class="c" style="left:1112px;top:231px;width:98px;color:#fff;">ООО &quot;АБЗ № 1&quot;</div>
<div style="position:absolute;left:1210px;top:227px;width:1px;height:21px;background:#c8d6f0;"></div>
<div class="c" style="left:1211px;top:231px;width:122px;text-align:right;color:#fff;letter-spacing:0.2px;">6 570.00</div>
<div style="position:absolute;left:27px;top:268px;width:1308px;height:1px;background:#e6dedb;"></div>
<div style="position:absolute;left:42px;top:249px;width:27px;height:18px;background:#d6d3ce;"></div>
<div class="t" style="left:27px;top:252px;width:42px;text-align:right;color:#000;">2</div>
<div style="position:absolute;left:70px;top:248px;width:1px;height:21px;background:#e6dedb;"></div>
<div style="position:absolute;left:87px;top:249px;width:16px;height:16px;box-sizing:border-box;border:1px solid #000;background:#ffff00;"></div>
<div style="position:absolute;left:118px;top:248px;width:1px;height:21px;background:#e6dedb;"></div>
<div style="position:absolute;left:120px;top:249px;width:62px;height:18px;background:#e7efe5;"></div>
<div class="c" style="left:119px;top:252px;width:63px;color:#000;">Подготовительные</div>
<div style="position:absolute;left:183px;top:248px;width:1px;height:21px;background:#e6dedb;"></div>
<div style="position:absolute;left:185px;top:249px;width:174px;height:18px;background:#e7efe5;"></div>
<div class="c" style="left:185px;top:252px;width:174px;color:#000;">Устройство геодезической разбивки</div>
<div style="position:absolute;left:360px;top:248px;width:1px;height:21px;background:#e6dedb;"></div>
<div class="c" style="left:362px;top:252px;width:47px;color:#000;">м2</div>
<div style="position:absolute;left:410px;top:248px;width:1px;height:21px;background:#e6dedb;"></div>
<div style="position:absolute;left:412px;top:249px;width:66px;height:18px;background:#e7efe5;"></div>
<div class="c" style="left:412px;top:252px;width:66px;color:#22c022;">&lt;=Расчистка территории</div>
<div style="position:absolute;left:479px;top:248px;width:1px;height:21px;background:#e6dedb;"></div>
<div class="c" style="left:481px;top:252px;width:64px;color:#000;letter-spacing:0.2px;">20.12.2021</div>
<div style="position:absolute;left:546px;top:248px;width:1px;height:21px;background:#e6dedb;"></div>
<div style="position:absolute;left:548px;top:249px;width:83px;height:18px;background:#e7efe5;"></div>
<div class="c" style="left:547px;top:252px;width:84px;text-align:right;color:#000;letter-spacing:0.2px;">5</div>
<div style="position:absolute;left:632px;top:248px;width:1px;height:21px;background:#e6dedb;"></div>
<div style="position:absolute;left:634px;top:249px;width:74px;height:18px;background:#e7efe5;"></div>
<div class="c" style="left:634px;top:252px;width:74px;color:#000;letter-spacing:0.2px;">24.12.2021</div>
<div style="position:absolute;left:709px;top:248px;width:1px;height:21px;background:#e6dedb;"></div>
<div class="c" style="left:710px;top:252px;width:68px;text-align:right;color:#000;letter-spacing:0.2px;">9 176.00</div>
<div style="position:absolute;left:779px;top:248px;width:1px;height:21px;background:#e6dedb;"></div>
<div class="c" style="left:780px;top:252px;width:57px;text-align:right;color:#000;letter-spacing:0.2px;">120.0000</div>
<div style="position:absolute;left:838px;top:248px;width:1px;height:21px;background:#e6dedb;"></div>
<div style="position:absolute;left:937px;top:248px;width:1px;height:21px;background:#e6dedb;"></div>
<div class="c" style="left:938px;top:252px;width:69px;text-align:right;color:#000;letter-spacing:0.2px;">120</div>
<div style="position:absolute;left:1008px;top:248px;width:1px;height:21px;background:#e6dedb;"></div>
<div class="c" style="left:1009px;top:252px;width:99px;color:#000;">Норма</div>
<div style="position:absolute;left:1109px;top:248px;width:1px;height:21px;background:#e6dedb;"></div>
<div class="c" style="left:1111px;top:252px;width:98px;color:#000;">ООО &quot;СтройУниверсал&quot;</div>
<div style="position:absolute;left:1210px;top:248px;width:1px;height:21px;background:#e6dedb;"></div>
<div class="c" style="left:1211px;top:252px;width:123px;text-align:right;color:#000;letter-spacing:0.2px;">8 258.40</div>
<div style="position:absolute;left:27px;top:289px;width:1308px;height:1px;background:#e6dedb;"></div>
<div style="position:absolute;left:42px;top:270px;width:27px;height:18px;background:#d6d3ce;"></div>
<div class="t" style="left:27px;top:273px;width:42px;text-align:right;color:#000;">3</div>
<div style="position:absolute;left:70px;top:269px;width:1px;height:21px;background:#e6dedb;"></div>
<div style="position:absolute;left:87px;top:270px;width:16px;height:16px;box-sizing:border-box;border:1px solid #000;background:#ffff00;"></div>
<div style="position:absolute;left:118px;top:269px;width:1px;height:21px;background:#e6dedb;"></div>
<div style="position:absolute;left:120px;top:270px;width:62px;height:18px;background:#e7efe5;"></div>
<div class="c" style="left:119px;top:273px;width:63px;color:#000;">Подготовительные</div>
<div style="position:absolute;left:183px;top:269px;width:1px;height:21px;background:#e6dedb;"></div>
<div style="position:absolute;left:185px;top:270px;width:174px;height:18px;background:#e7efe5;"></div>
<div class="c" style="left:185px;top:273px;width:174px;color:#000;">Предварительная вертикальная планировка</div>
<div style="position:absolute;left:360px;top:269px;width:1px;height:21px;background:#e6dedb;"></div>
<div class="c" style="left:362px;top:273px;width:47px;color:#000;">м3</div>
<div style="position:absolute;left:410px;top:269px;width:1px;height:21px;background:#e6dedb;"></div>
<div style="position:absolute;left:412px;top:270px;width:66px;height:18px;background:#e7efe5;"></div>
<div class="c" style="left:412px;top:273px;width:66px;color:#22c022;">&lt;=Устройство геодезической</div>
<div style="position:absolute;left:479px;top:269px;width:1px;height:21px;background:#e6dedb;"></div>
<div class="c" style="left:481px;top:273px;width:64px;color:#000;letter-spacing:0.2px;">24.12.2021</div>
<div style="position:absolute;left:546px;top:269px;width:1px;height:21px;background:#e6dedb;"></div>
<div style="position:absolute;left:548px;top:270px;width:83px;height:18px;background:#e7efe5;"></div>
<div class="c" style="left:547px;top:273px;width:84px;text-align:right;color:#000;letter-spacing:0.2px;">7</div>
<div style="position:absolute;left:632px;top:269px;width:1px;height:21px;background:#e6dedb;"></div>
<div style="position:absolute;left:634px;top:270px;width:74px;height:18px;background:#e7efe5;"></div>
<div class="c" style="left:634px;top:273px;width:74px;color:#000;letter-spacing:0.2px;">30.12.2021</div>
<div style="position:absolute;left:709px;top:269px;width:1px;height:21px;background:#e6dedb;"></div>
<div class="c" style="left:710px;top:273px;width:68px;text-align:right;color:#000;letter-spacing:0.2px;">8 020.00</div>
<div style="position:absolute;left:779px;top:269px;width:1px;height:21px;background:#e6dedb;"></div>
<div class="c" style="left:780px;top:273px;width:57px;text-align:right;color:#000;letter-spacing:0.2px;">13.2000</div>
<div style="position:absolute;left:838px;top:269px;width:1px;height:21px;background:#e6dedb;"></div>
<div style="position:absolute;left:937px;top:269px;width:1px;height:21px;background:#e6dedb;"></div>
<div class="c" style="left:938px;top:273px;width:69px;text-align:right;color:#000;letter-spacing:0.2px;">13.2</div>
<div style="position:absolute;left:1008px;top:269px;width:1px;height:21px;background:#e6dedb;"></div>
<div class="c" style="left:1009px;top:273px;width:99px;color:#000;">Норма</div>
<div style="position:absolute;left:1109px;top:269px;width:1px;height:21px;background:#e6dedb;"></div>
<div class="c" style="left:1111px;top:273px;width:98px;color:#000;">ООО &quot;СтройУниверсал&quot;</div>
<div style="position:absolute;left:1210px;top:269px;width:1px;height:21px;background:#e6dedb;"></div>
<div class="c" style="left:1211px;top:273px;width:123px;text-align:right;color:#000;letter-spacing:0.2px;">7 218.00</div>
<div style="position:absolute;left:27px;top:310px;width:1308px;height:1px;background:#e6dedb;"></div>
<div style="position:absolute;left:42px;top:291px;width:27px;height:18px;background:#d6d3ce;"></div>
<div class="t" style="left:27px;top:294px;width:42px;text-align:right;color:#000;">4</div>
<div style="position:absolute;left:70px;top:290px;width:1px;height:21px;background:#e6dedb;"></div>
<div style="position:absolute;left:118px;top:290px;width:1px;height:21px;background:#e6dedb;"></div>
<div style="position:absolute;left:120px;top:291px;width:62px;height:18px;background:#e7efe5;"></div>
<div class="c" style="left:119px;top:294px;width:63px;color:#000;">Подготовительные</div>
<div style="position:absolute;left:183px;top:290px;width:1px;height:21px;background:#e6dedb;"></div>
<div style="position:absolute;left:185px;top:291px;width:174px;height:18px;background:#e7efe5;"></div>
<div class="c" style="left:185px;top:294px;width:174px;color:#000;">Ограждение и освещение строительной площадки</div>
<div style="position:absolute;left:360px;top:290px;width:1px;height:21px;background:#e6dedb;"></div>
<div class="c" style="left:362px;top:294px;width:47px;color:#000;">м2</div>
<div style="position:absolute;left:410px;top:290px;width:1px;height:21px;background:#e6dedb;"></div>
<div style="position:absolute;left:412px;top:291px;width:66px;height:18px;background:#e7efe5;"></div>
<div class="c" style="left:412px;top:294px;width:66px;color:#22c022;">&lt;=Предварительная</div>
<div style="position:absolute;left:479px;top:290px;width:1px;height:21px;background:#e6dedb;"></div>
<div class="c" style="left:481px;top:294px;width:64px;color:#000;letter-spacing:0.2px;">30.12.2021</div>
<div style="position:absolute;left:546px;top:290px;width:1px;height:21px;background:#e6dedb;"></div>
<div style="position:absolute;left:548px;top:291px;width:83px;height:18px;background:#e7efe5;"></div>
<div class="c" style="left:547px;top:294px;width:84px;text-align:right;color:#000;letter-spacing:0.2px;">3</div>
<div style="position:absolute;left:632px;top:290px;width:1px;height:21px;background:#e6dedb;"></div>
<div style="position:absolute;left:634px;top:291px;width:74px;height:18px;background:#e7efe5;"></div>
<div class="c" style="left:634px;top:294px;width:74px;color:#000;letter-spacing:0.2px;">01.01.2022</div>
<div style="position:absolute;left:709px;top:290px;width:1px;height:21px;background:#e6dedb;"></div>
<div class="c" style="left:710px;top:294px;width:68px;text-align:right;color:#000;letter-spacing:0.2px;">34 100.00</div>
<div style="position:absolute;left:779px;top:290px;width:1px;height:21px;background:#e6dedb;"></div>
<div class="c" style="left:780px;top:294px;width:57px;text-align:right;color:#000;letter-spacing:0.2px;">55.0000</div>
<div style="position:absolute;left:838px;top:290px;width:1px;height:21px;background:#e6dedb;"></div>
<div style="position:absolute;left:937px;top:290px;width:1px;height:21px;background:#e6dedb;"></div>
<div class="c" style="left:938px;top:294px;width:69px;text-align:right;color:#000;letter-spacing:0.2px;">35</div>
<div style="position:absolute;left:1008px;top:290px;width:1px;height:21px;background:#e6dedb;"></div>
<div class="c" style="left:1009px;top:294px;width:99px;color:#000;">Норма</div>
<div style="position:absolute;left:1109px;top:290px;width:1px;height:21px;background:#e6dedb;"></div>
<div class="c" style="left:1111px;top:294px;width:98px;color:#000;">ООО &quot;СтройУниверсал&quot;</div>
<div style="position:absolute;left:1210px;top:290px;width:1px;height:21px;background:#e6dedb;"></div>
<div class="c" style="left:1211px;top:294px;width:123px;text-align:right;color:#000;letter-spacing:0.2px;">30 690.00</div>
<div style="position:absolute;left:27px;top:331px;width:1308px;height:1px;background:#e6dedb;"></div>
<div style="position:absolute;left:42px;top:312px;width:27px;height:18px;background:#d6d3ce;"></div>
<div class="t" style="left:27px;top:315px;width:42px;text-align:right;color:#000;">5</div>
<div style="position:absolute;left:70px;top:311px;width:1px;height:21px;background:#e6dedb;"></div>
<div style="position:absolute;left:118px;top:311px;width:1px;height:21px;background:#e6dedb;"></div>
<div style="position:absolute;left:120px;top:312px;width:62px;height:18px;background:#e7efe5;"></div>
<div class="c" style="left:119px;top:315px;width:63px;color:#000;">Фундамент</div>
<div style="position:absolute;left:183px;top:311px;width:1px;height:21px;background:#e6dedb;"></div>
<div style="position:absolute;left:185px;top:312px;width:174px;height:18px;background:#e7efe5;"></div>
<div class="c" style="left:185px;top:315px;width:174px;color:#000;">Забивка железобетонных свай</div>
<div style="position:absolute;left:360px;top:311px;width:1px;height:21px;background:#e6dedb;"></div>
<div class="c" style="left:362px;top:315px;width:47px;color:#000;">п/м</div>
<div style="position:absolute;left:410px;top:311px;width:1px;height:21px;background:#e6dedb;"></div>
<div style="position:absolute;left:412px;top:312px;width:66px;height:18px;background:#e7efe5;"></div>
<div class="c" style="left:412px;top:315px;width:66px;color:#22c022;">&lt;=Ограждение</div>
<div style="position:absolute;left:479px;top:311px;width:1px;height:21px;background:#e6dedb;"></div>
<div class="c" style="left:481px;top:315px;width:64px;color:#000;letter-spacing:0.2px;">01.01.2022</div>
<div style="position:absolute;left:546px;top:311px;width:1px;height:21px;background:#e6dedb;"></div>
<div style="position:absolute;left:548px;top:312px;width:83px;height:18px;background:#e7efe5;"></div>
<div class="c" style="left:547px;top:315px;width:84px;text-align:right;color:#000;letter-spacing:0.2px;">4</div>
<div style="position:absolute;left:632px;top:311px;width:1px;height:21px;background:#e6dedb;"></div>
<div style="position:absolute;left:634px;top:312px;width:74px;height:18px;background:#e7efe5;"></div>
<div class="c" style="left:634px;top:315px;width:74px;color:#000;letter-spacing:0.2px;">04.01.2022</div>
<div style="position:absolute;left:709px;top:311px;width:1px;height:21px;background:#e6dedb;"></div>
<div class="c" style="left:710px;top:315px;width:68px;text-align:right;color:#000;letter-spacing:0.2px;">219 040.00</div>
<div style="position:absolute;left:779px;top:311px;width:1px;height:21px;background:#e6dedb;"></div>
<div class="c" style="left:780px;top:315px;width:57px;text-align:right;color:#000;letter-spacing:0.2px;">148.0000</div>
<div style="position:absolute;left:838px;top:311px;width:1px;height:21px;background:#e6dedb;"></div>
<div style="position:absolute;left:937px;top:311px;width:1px;height:21px;background:#e6dedb;"></div>
<div class="c" style="left:938px;top:315px;width:69px;text-align:right;color:#000;letter-spacing:0.2px;">0</div>
<div style="position:absolute;left:1008px;top:311px;width:1px;height:21px;background:#e6dedb;"></div>
<div class="c" style="left:1009px;top:315px;width:99px;color:#000;">Норма</div>
<div style="position:absolute;left:1109px;top:311px;width:1px;height:21px;background:#e6dedb;"></div>
<div style="position:absolute;left:1210px;top:311px;width:1px;height:21px;background:#e6dedb;"></div>
<div class="c" style="left:1211px;top:315px;width:123px;text-align:right;color:#000;letter-spacing:0.2px;">0.00</div>
<div style="position:absolute;left:27px;top:352px;width:1308px;height:1px;background:#e6dedb;"></div>
<div style="position:absolute;left:42px;top:333px;width:27px;height:18px;background:#d6d3ce;"></div>
<div class="t" style="left:27px;top:336px;width:42px;text-align:right;color:#000;">6</div>
<div style="position:absolute;left:70px;top:332px;width:1px;height:21px;background:#e6dedb;"></div>
<div style="position:absolute;left:118px;top:332px;width:1px;height:21px;background:#e6dedb;"></div>
<div style="position:absolute;left:120px;top:333px;width:62px;height:18px;background:#e7efe5;"></div>
<div class="c" style="left:119px;top:336px;width:63px;color:#000;">Фундамент</div>
<div style="position:absolute;left:183px;top:332px;width:1px;height:21px;background:#e6dedb;"></div>
<div style="position:absolute;left:185px;top:333px;width:174px;height:18px;background:#e7efe5;"></div>
<div class="c" style="left:185px;top:336px;width:174px;color:#000;">Отбивка оголовок свай</div>
<div style="position:absolute;left:360px;top:332px;width:1px;height:21px;background:#e6dedb;"></div>
<div class="c" style="left:362px;top:336px;width:47px;color:#000;">шт.</div>
<div style="position:absolute;left:410px;top:332px;width:1px;height:21px;background:#e6dedb;"></div>
<div style="position:absolute;left:412px;top:333px;width:66px;height:18px;background:#e7efe5;"></div>
<div class="c" style="left:412px;top:336px;width:66px;color:#22c022;">&lt;=Забивка железобетонных</div>
<div style="position:absolute;left:479px;top:332px;width:1px;height:21px;background:#e6dedb;"></div>
<div class="c" style="left:481px;top:336px;width:64px;color:#000;letter-spacing:0.2px;">04.01.2022</div>
<div style="position:absolute;left:546px;top:332px;width:1px;height:21px;background:#e6dedb;"></div>
<div style="position:absolute;left:548px;top:333px;width:83px;height:18px;background:#e7efe5;"></div>
<div class="c" style="left:547px;top:336px;width:84px;text-align:right;color:#000;letter-spacing:0.2px;">1</div>
<div style="position:absolute;left:632px;top:332px;width:1px;height:21px;background:#e6dedb;"></div>
<div style="position:absolute;left:634px;top:333px;width:74px;height:18px;background:#e7efe5;"></div>
<div class="c" style="left:634px;top:336px;width:74px;color:#000;letter-spacing:0.2px;">04.01.2022</div>
<div style="position:absolute;left:709px;top:332px;width:1px;height:21px;background:#e6dedb;"></div>
<div class="c" style="left:710px;top:336px;width:68px;text-align:right;color:#000;letter-spacing:0.2px;">18 500.00</div>
<div style="position:absolute;left:779px;top:332px;width:1px;height:21px;background:#e6dedb;"></div>
<div class="c" style="left:780px;top:336px;width:57px;text-align:right;color:#000;letter-spacing:0.2px;">37.0000</div>
<div style="position:absolute;left:838px;top:332px;width:1px;height:21px;background:#e6dedb;"></div>
<div style="position:absolute;left:937px;top:332px;width:1px;height:21px;background:#e6dedb;"></div>
<div class="c" style="left:938px;top:336px;width:69px;text-align:right;color:#000;letter-spacing:0.2px;">0</div>
<div style="position:absolute;left:1008px;top:332px;width:1px;height:21px;background:#e6dedb;"></div>
<div class="c" style="left:1009px;top:336px;width:99px;color:#000;">Норма</div>
<div style="position:absolute;left:1109px;top:332px;width:1px;height:21px;background:#e6dedb;"></div>
<div style="position:absolute;left:1210px;top:332px;width:1px;height:21px;background:#e6dedb;"></div>
<div class="c" style="left:1211px;top:336px;width:123px;text-align:right;color:#000;letter-spacing:0.2px;">0.00</div>
<div style="position:absolute;left:27px;top:373px;width:1308px;height:1px;background:#e6dedb;"></div>
<div style="position:absolute;left:42px;top:354px;width:27px;height:18px;background:#d6d3ce;"></div>
<div class="t" style="left:27px;top:357px;width:42px;text-align:right;color:#000;">7</div>
<div style="position:absolute;left:70px;top:353px;width:1px;height:21px;background:#e6dedb;"></div>
<div style="position:absolute;left:118px;top:353px;width:1px;height:21px;background:#e6dedb;"></div>
<div style="position:absolute;left:120px;top:354px;width:62px;height:18px;background:#e7efe5;"></div>
<div class="c" style="left:119px;top:357px;width:63px;color:#000;">Фундамент</div>
<div style="position:absolute;left:183px;top:353px;width:1px;height:21px;background:#e6dedb;"></div>
<div style="position:absolute;left:185px;top:354px;width:174px;height:18px;background:#e7efe5;"></div>
<div class="c" style="left:185px;top:357px;width:174px;color:#000;">Уборка отходов свай</div>
<div style="position:absolute;left:360px;top:353px;width:1px;height:21px;background:#e6dedb;"></div>
<div style="position:absolute;left:410px;top:353px;width:1px;height:21px;background:#e6dedb;"></div>
<div style="position:absolute;left:412px;top:354px;width:66px;height:18px;background:#e7efe5;"></div>
<div class="c" style="left:412px;top:357px;width:66px;color:#22c022;">&lt;=Отбивка оголовок</div>
<div style="position:absolute;left:479px;top:353px;width:1px;height:21px;background:#e6dedb;"></div>
<div class="c" style="left:481px;top:357px;width:64px;color:#000;letter-spacing:0.2px;">04.01.2022</div>
<div style="position:absolute;left:546px;top:353px;width:1px;height:21px;background:#e6dedb;"></div>
<div style="position:absolute;left:548px;top:354px;width:83px;height:18px;background:#e7efe5;"></div>
<div class="c" style="left:547px;top:357px;width:84px;text-align:right;color:#000;letter-spacing:0.2px;">1</div>
<div style="position:absolute;left:632px;top:353px;width:1px;height:21px;background:#e6dedb;"></div>
<div style="position:absolute;left:634px;top:354px;width:74px;height:18px;background:#e7efe5;"></div>
<div class="c" style="left:634px;top:357px;width:74px;color:#000;letter-spacing:0.2px;">04.01.2022</div>
<div style="position:absolute;left:709px;top:353px;width:1px;height:21px;background:#e6dedb;"></div>
<div class="c" style="left:710px;top:357px;width:68px;text-align:right;color:#000;letter-spacing:0.2px;">16 000.00</div>
<div style="position:absolute;left:779px;top:353px;width:1px;height:21px;background:#e6dedb;"></div>
<div class="c" style="left:780px;top:357px;width:57px;text-align:right;color:#000;letter-spacing:0.2px;">1.0000</div>
<div style="position:absolute;left:838px;top:353px;width:1px;height:21px;background:#e6dedb;"></div>
<div style="position:absolute;left:937px;top:353px;width:1px;height:21px;background:#e6dedb;"></div>
<div class="c" style="left:938px;top:357px;width:69px;text-align:right;color:#000;letter-spacing:0.2px;">0</div>
<div style="position:absolute;left:1008px;top:353px;width:1px;height:21px;background:#e6dedb;"></div>
<div class="c" style="left:1009px;top:357px;width:99px;color:#000;">Норма</div>
<div style="position:absolute;left:1109px;top:353px;width:1px;height:21px;background:#e6dedb;"></div>
<div style="position:absolute;left:1210px;top:353px;width:1px;height:21px;background:#e6dedb;"></div>
<div class="c" style="left:1211px;top:357px;width:123px;text-align:right;color:#000;letter-spacing:0.2px;">0.00</div>
<div style="position:absolute;left:10px;top:432px;width:1325px;height:16px;background:linear-gradient(#eee6de,#faf6f2 50%,#fefcfb);"></div>
<div style="position:absolute;left:10px;top:432px;width:16px;height:16px;box-sizing:border-box;border:1px solid #8a7e74;border-radius:2px;background:linear-gradient(#fbf6f1,#eee6dc);"></div>
<svg style="position:absolute;left:10px;top:432px" width="16" height="16" viewBox="0 0 16 16"><path d="M9.5 4.5 L6 8 L9.5 11.5" stroke="#6a625a" stroke-width="1.3" fill="none"/></svg>
<div style="position:absolute;left:1319px;top:432px;width:16px;height:16px;box-sizing:border-box;border:1px solid #8a7e74;border-radius:2px;background:linear-gradient(#fbf6f1,#eee6dc);"></div>
<svg style="position:absolute;left:1319px;top:432px" width="16" height="16" viewBox="0 0 16 16"><path d="M6.5 4.5 L10 8 L6.5 11.5" stroke="#6a625a" stroke-width="1.3" fill="none"/></svg>
<div style="position:absolute;left:27px;top:432px;width:619px;height:16px;box-sizing:border-box;border:1px solid #8a7e74;border-radius:2px;background:linear-gradient(#fbf6f1,#eee6dc);"></div>
<svg style="position:absolute;left:332px;top:436px" width="8" height="8" viewBox="0 0 8 8"><path d="M1.5 0 V7 M3.5 0 V7 M5.5 0 V7" stroke="#8a7e74" stroke-width="1"/></svg>
<div class="t" style="left:6px;top:460px;font-size:11.2px;">Группа компаний &quot;АЛТИУС&quot; © www.altius.ru</div>
<svg style="position:absolute;left:1328px;top:463px" width="13" height="13" viewBox="0 0 13 13"><path d="M12 1 L1 12 M12 5 L5 12 M12 9 L9 12" stroke="#808080" stroke-width="1.2"/><path d="M12.5 2 L2 12.5 M12.5 6 L6 12.5 M12.5 10 L10 12.5" stroke="#fff" stroke-width="0.8"/></svg>
</div></body></html>
